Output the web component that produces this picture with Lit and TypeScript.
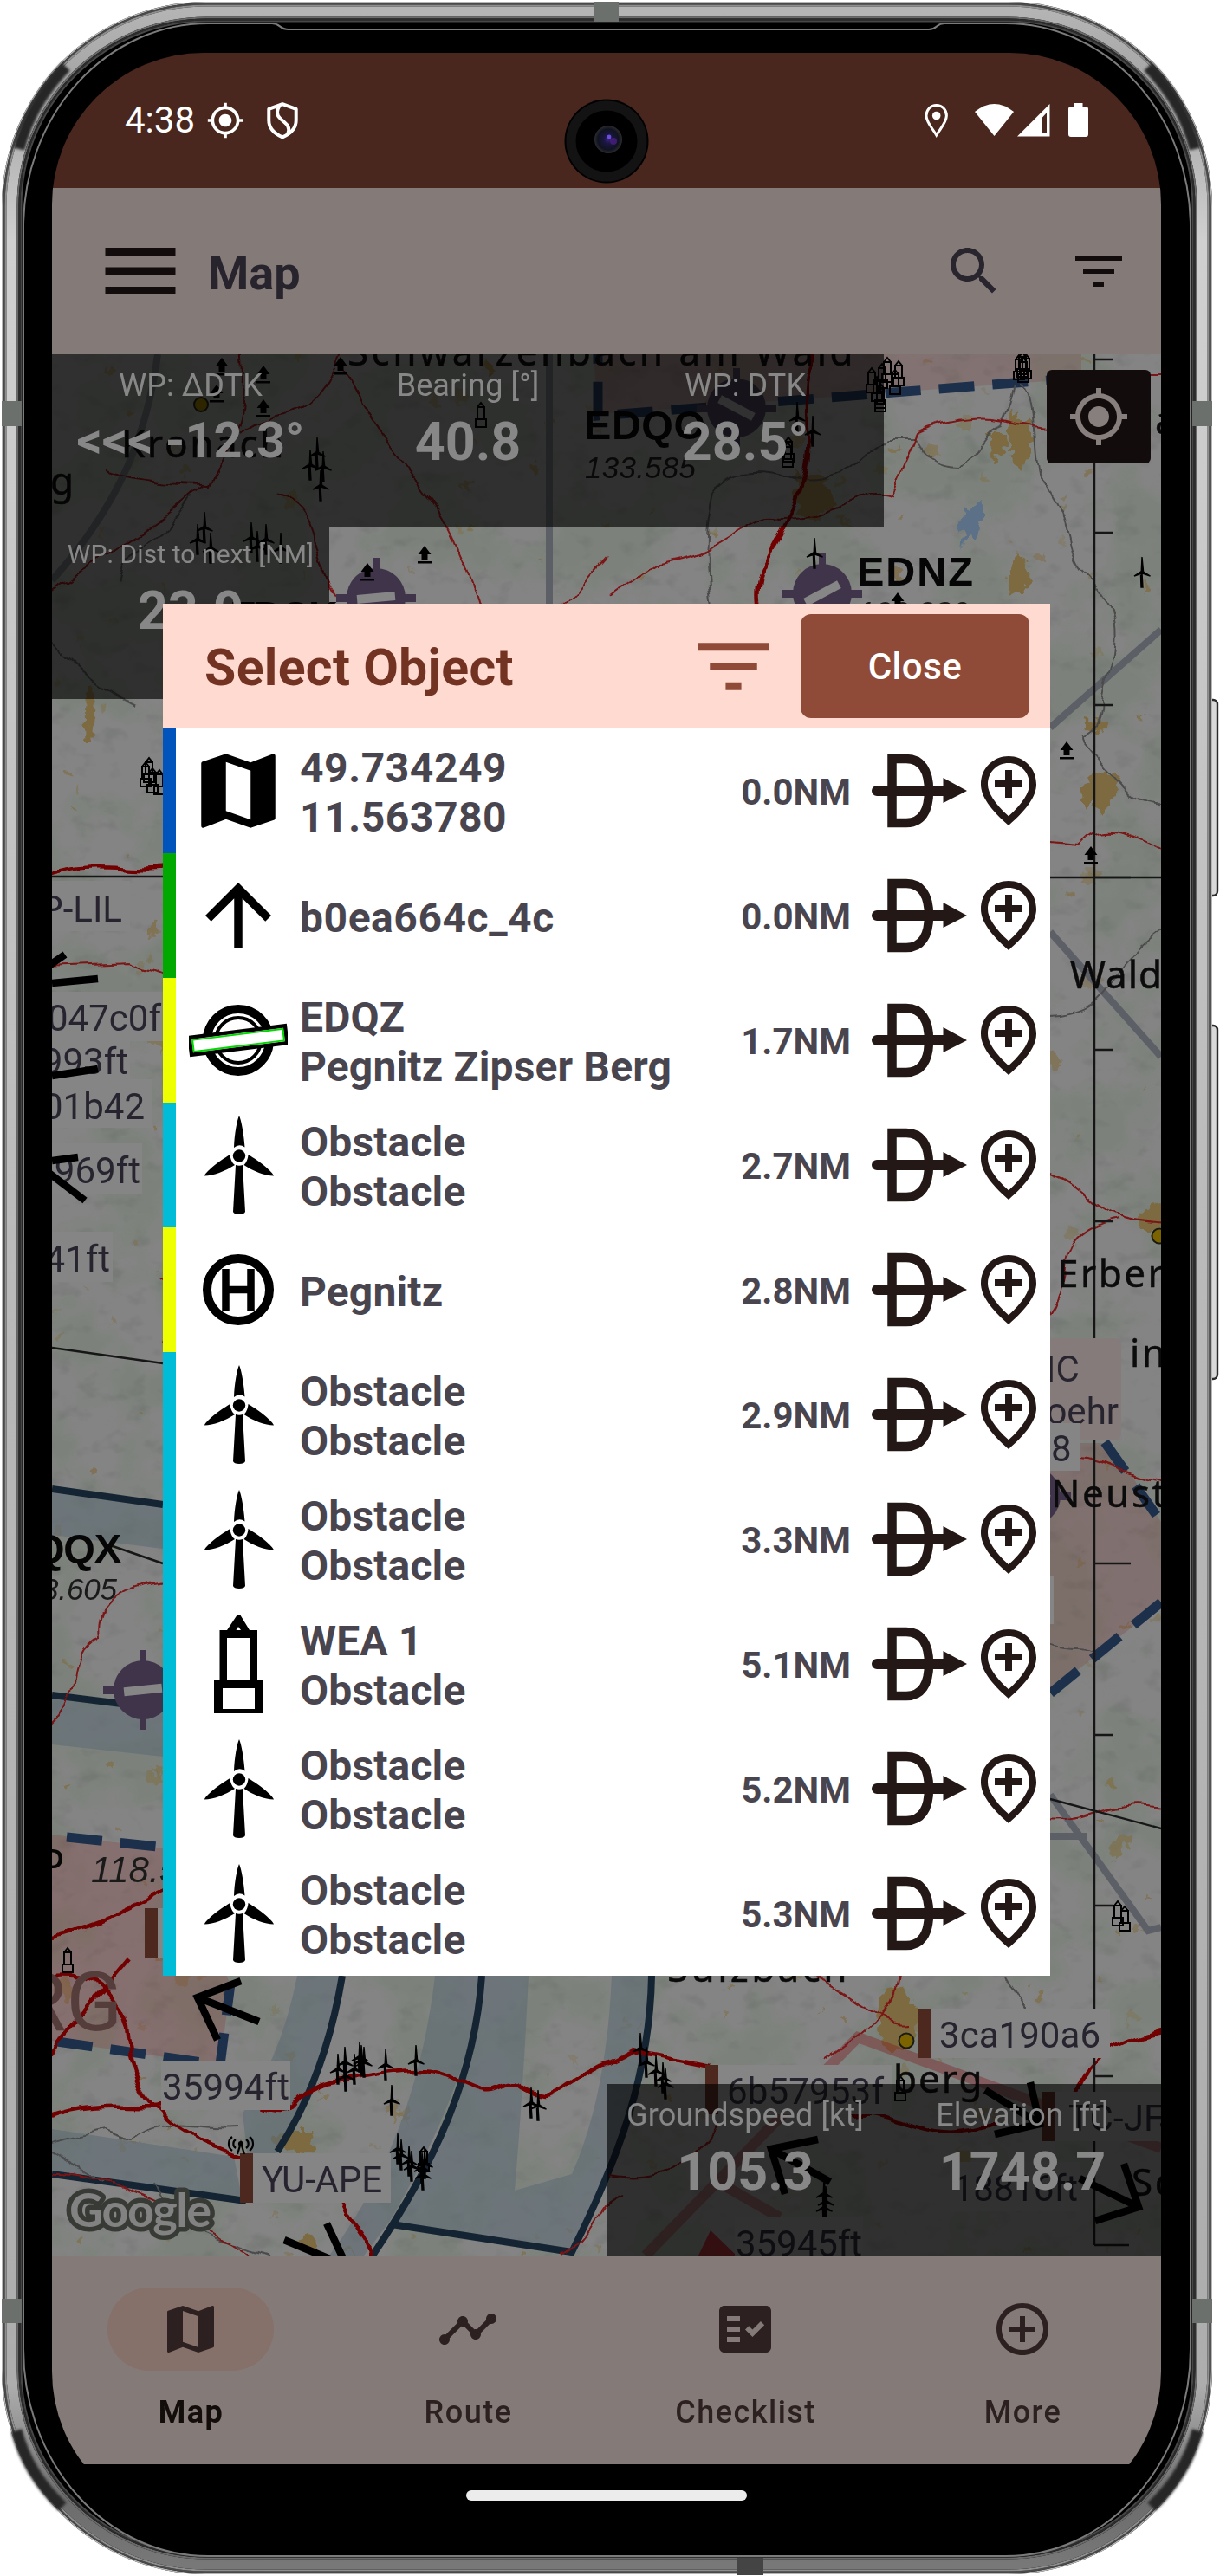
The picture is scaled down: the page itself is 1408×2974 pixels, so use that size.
import { LitElement, html, svg, css, nothing } from "lit";
import { customElement, property } from "lit/decorators.js";

const MAP_PATH =
  "M20.5 3l-.16.03L15 5.1 9 3 3.36 4.9c-.21.07-.36.25-.36.48V20.5c0 .28.22.5.5.5l.16-.03L9 18.9l6 2.1 5.64-1.9c.21-.07.36-.25.36-.48V3.5c0-.28-.22-.5-.5-.5zM15 19l-6-2.11V5l6 2.11V19z";
const GPS_PATH =
  "M12 8c-2.21 0-4 1.79-4 4s1.79 4 4 4 4-1.79 4-4-1.79-4-4-4zm8.94 3c-.46-4.17-3.77-7.48-7.94-7.94V1h-2v2.06C6.83 3.52 3.52 6.83 3.06 11H1v2h2.06c.46 4.17 3.77 7.48 7.94 7.94V23h2v-2.06c4.17-.46 7.48-3.77 7.94-7.94H23v-2h-2.06zM12 19c-3.87 0-7-3.13-7-7s3.13-7 7-7 7 3.13 7 7-3.13 7-7 7z";
const ICONS: Record<string, string> = {
  map: MAP_PATH,
  gps: GPS_PATH,
  menu: "M3 18h18v-2H3v2zm0-5h18v-2H3v2zm0-7v2h18V6H3z",
  search:
    "M15.5 14h-.79l-.28-.27C15.41 12.59 16 11.11 16 9.5 16 5.91 13.09 3 9.5 3S3 5.91 3 9.5 5.91 16 9.5 16c1.61 0 3.09-.59 4.23-1.57l.27.28v.79l5 4.99L20.49 19l-4.99-5zm-6 0C7.01 14 5 11.99 5 9.5S7.01 5 9.5 5 14 7.01 14 9.5 11.99 14 9.5 14z",
  filter: "M10 18h4v-2h-4v2zM3 6v2h18V6H3zm3 7h12v-2H6v2z",
  up: "M4 12l1.41 1.41L11 7.83V20h2V7.83l5.58 5.59L20 12l-8-8-8 8z",
  pin: "M13 6h-2v3H8v2h3v3h2v-3h3V9h-3V6zm5 4.2C18 6.57 15.35 4 12 4s-6 2.57-6 6.2c0 2.34 1.95 5.44 6 9.14 4.05-3.7 6-6.8 6-9.14zM12 2c4.2 0 8 3.22 8 8.2 0 3.32-2.67 7.25-8 11.8-5.33-4.55-8-8.48-8-11.8C4 5.22 7.8 2 12 2z",
  route:
    "M23 8c0 1.1-.9 2-2 2-.18 0-.35-.02-.51-.07l-3.56 3.55c.05.16.07.34.07.52 0 1.1-.9 2-2 2s-2-.9-2-2c0-.18.02-.36.07-.52l-2.55-2.55c-.16.05-.34.07-.52.07s-.36-.02-.52-.07l-4.55 4.56c.05.16.07.33.07.51 0 1.1-.9 2-2 2s-2-.9-2-2 .9-2 2-2c.18 0 .35.02.51.07l4.56-4.55C8.02 9.36 8 9.18 8 9c0-1.1.9-2 2-2s2 .9 2 2c0 .18-.02.36-.07.52l2.55 2.55c.16-.05.34-.07.52-.07s.36.02.52.07l3.55-3.56C19.02 8.35 19 8.18 19 8c0-1.1.9-2 2-2s2 .9 2 2z",
  checklist:
    "M20 3H4c-1.1 0-2 .9-2 2v14c0 1.1.9 2 2 2h16c1.1 0 2-.9 2-2V5c0-1.1-.9-2-2-2zM10 17H5v-2h5v2zm0-4H5v-2h5v2zm0-4H5V7h5v2zm4.82 6L12 12.16l1.41-1.41 1.41 1.42L17.99 9l1.42 1.42L14.82 15z",
  more: "M13 7h-2v4H7v2h4v4h2v-4h4v-2h-4V7zm-1-5C6.48 2 2 6.48 2 12s4.48 10 10 10 10-4.48 10-10S17.52 2 12 2zm0 18c-4.41 0-8-3.59-8-8s3.59-8 8-8 8 3.59 8 8-3.59 8-8 8z",
};

@customElement("m-icon")
class MIcon extends LitElement {
  @property() name = "map";
  static styles = css`
    :host { display: inline-flex; }
    .glyph { width: 100%; height: 100%; fill: currentColor; display: block; }
  `;
  render() {
    return html`<svg class="glyph" viewBox="0 0 24 24"><path fill-rule="evenodd" d=${ICONS[this.name]}></path></svg>`;
  }
}

/* ---------- metal body of the device ---------- */
@customElement("device-body")
class DeviceBody extends LitElement {
  static styles = css`
    :host { display: block; width: 1408px; height: 2974px; }
    .body { display: block; }
  `;
  render() {
    const ring = (o: number, w: number, c: string) => svg`
      <rect x=${2 + o + w / 2} y=${2 + o + w / 2} width=${1397 - 2 * o - w} height=${2970 - 2 * o - w}
        rx=${236 - o - w / 2} fill="none" stroke=${c} stroke-width=${w}></rect>`;
    const dark = (d: string) => svg`<path d=${d} fill="none" stroke="#262626" stroke-width="13" filter="url(#soft)"></path>`;
    return html`<svg class="body" width="1408" height="2974" viewBox="0 0 1408 2974">
      <defs>
        <linearGradient id="metal" x1="0" y1="0" x2="0" y2="1">
          <stop offset="0" stop-color="#b4b4b4"></stop>
          <stop offset=".03" stop-color="#a4a4a4"></stop>
          <stop offset=".09" stop-color="#d0d0d0"></stop>
          <stop offset=".5" stop-color="#b9b9b9"></stop>
          <stop offset=".93" stop-color="#adadad"></stop>
          <stop offset=".975" stop-color="#6c6c6c"></stop>
          <stop offset="1" stop-color="#787878"></stop>
        </linearGradient>
        <filter id="soft" x="-30%" y="-30%" width="160%" height="160%"><feGaussianBlur stdDeviation="1.6"></feGaussianBlur></filter>
      </defs>
      <rect x="1394" y="808" width="11" height="226" rx="5" fill="#d9d9d9" stroke="#2a2a2a" stroke-width="2.4"></rect>
      <rect x="1394" y="1184" width="11" height="408" rx="5" fill="#d9d9d9" stroke="#2a2a2a" stroke-width="2.4"></rect>
      <rect x="2" y="2" width="1397" height="2970" rx="236" fill="#000"></rect>
      ${ring(0, 1.5, "#b5b5b5")} ${ring(1.5, 2, "#4a4a4a")} ${ring(3.5, 2, "#8e8e8e")}
      ${ring(5.5, 12, "url(#metal)")} ${ring(17.5, 2, "#6a6a6a")} ${ring(19.5, 2, "#2c2c2c")} ${ring(21.5, 2, "#474747")}
      ${dark("M22 172Q35 120 76 77")}
      ${dark("M1379 172Q1366 120 1325 77")}
      ${dark("M19 2806Q32 2856 72 2894")}
      ${dark("M1382 2806Q1369 2856 1329 2894")}
      <path d="M27 262 V2712 A213 239 0 0 0 240 2951 H1161 A213 239 0 0 0 1374 2712 V262 A213 235 0 0 0 1161 27 H1090 C1080 27 1082 34 1072 34 H333 C322 34 324 27 314 27 H240 A213 235 0 0 0 27 262Z"
        fill="#000" stroke="#7b7b7b" stroke-width="2"></path>
      <g fill="#6c706d">
        <rect x="2" y="463" width="23" height="29"></rect><rect x="1376" y="463" width="23" height="29"></rect>
        <rect x="2" y="2654" width="23" height="28"></rect><rect x="1376" y="2654" width="23" height="28"></rect>
        <rect x="686" y="2" width="28" height="23"></rect>
      </g>
      <rect x="851" y="2953" width="30" height="20" fill="#444"></rect>
    </svg>`;
  }
}

/* ---------- aeronautical chart ---------- */
function seeded(seed: number) {
  let s = seed;
  return () => {
    s = (s * 1664525 + 1013904223) % 4294967296;
    return s / 4294967296;
  };
}

@customElement("chart-map")
class ChartMap extends LitElement {
  static styles = css`
    :host { display: block; width: 1280px; height: 2196px; }
    .chart { display: block; }
    .road { fill: none; stroke: #7c1414; stroke-width: 2; }
    .motor { fill: none; stroke: #720606; stroke-width: 4.5; }
    .rail { fill: none; stroke: #4c4c4c; stroke-width: 2; }
    .high { fill: none; stroke: #5c5f66; stroke-width: 8; }
    .navy { fill: none; stroke: #142433; stroke-width: 8; }
    .dash { fill: none; stroke: #1c2f4b; stroke-width: 11; stroke-dasharray: 41 21; }
    .grid { fill: none; stroke: #161616; stroke-width: 2.4; }
    .town { font-family: "Noto Sans", "DejaVu Sans", sans-serif; fill: #0b0b0b; font-size: 44px; letter-spacing: 2.500px; stroke: #0b0b0b; stroke-width: 0.5; }
    .wald { letter-spacing: 1px; }
    .code { font-family: "Liberation Sans", Arial, sans-serif; font-weight: 700; font-size: 47px; fill: #060606; }
    .letter { font-size: 31px; }
    .freq { font-family: "Liberation Sans", Arial, sans-serif; font-style: italic; font-size: 35px; fill: #1a1a1a; }
    .wide { font-size: 42px; }
    .call { font-family: Roboto, sans-serif; font-size: 42px; fill: #27242f; }
    .area { font-family: Roboto, sans-serif; font-size: 95px; fill: #553d3c; }
    .logo { font-family: Lato, sans-serif; font-weight: 700; font-size: 54px; }
    .traffic { fill: none; stroke: #000; stroke-width: 8.5; }
  `;

  private patches() {
    const r = seeded(77);
    const out = [];
    for (let i = 0; i < 560; i++) {
      const x = 60 + r() * 1280;
      const y = 409 + r() * 2196;
      const s = 3 + r() * r() * r() * 17;
      let d = "";
      for (let k = 0; k < 11; k++) {
        const a = (k / 11) * 6.283;
        const q = s * (0.3 + r() * 0.9);
        d += `${k ? "L" : "M"}${(x + Math.cos(a) * q).toFixed(1)} ${(y + Math.sin(a) * q * 1.1).toFixed(1)}`;
      }
      out.push(svg`<path d=${d + "Z"} fill="#7f6f48" opacity=${(0.35 + r() * 0.5).toFixed(2)}></path>`);
    }
    return out;
  }
  private turbine(x: number, y: number) {
    return svg`<path transform="translate(${x} ${y})" d="M-1.6 2L-1 18H1L0 2zM-.8 0L0-17 1.6 0zM0-1L-9 5 0 2zM0-1L9.5 5 0 2z" fill="#000" stroke="#000" stroke-width="1.4"></path>`;
  }
  private tower(x: number, y: number) {
    return svg`<path transform="translate(${x} ${y})" d="M-4-10V4H4V-10ZM-4-10L0-15 4-10M-6 4H6V13H-6Z" fill="none" stroke="#000" stroke-width="2"></path>`;
  }
  private lift(x: number, y: number) {
    return svg`<path transform="translate(${x} ${y})" d="M0-10L7.5 0H3.5V6H-3.5V0H-7.5ZM-8 8H8V10.5H-8Z" fill="#000"></path>`;
  }
  private airport(x: number, y: number, a: number) {
    return svg`<g transform="translate(${x} ${y})">
      <circle r="34" fill="#3f344a"></circle>
      <path d="M-46-4H46V5H-46ZM-4-46H4V46H-4Z" fill="#3f344a"></path>
      <rect x="-22" y="-5" width="44" height="10" fill="#868686" transform="rotate(${a})"></rect></g>`;
  }
  private tag(x: number, y: number, w: number, text: string, tx: number, tw: number, bar = false) {
    return svg`<rect x=${x} y=${y} width=${w} height="57" fill="#858585"></rect>
      ${bar ? svg`<rect x=${x - 15} y=${y} width="15" height="57" fill="#4c281e"></rect>` : nothing}
      <text class="call" x=${tx} y=${y + 45} textLength=${tw}>${text}</text>`;
  }

  render() {
    const ticks = [415, 615, 814, 1212, 1410, 2003, 2200, 2397];
    const turbines = [
      [366, 522], [358, 536], [370, 560], [373, 538], [236, 608], [228, 622], [243, 632], [290, 620], [307, 622], [324, 632], [297, 630],
      [920, 481], [938, 497], [940, 638], [1318, 660], [390, 2388], [398, 2380], [399, 2396], [409, 2388], [415, 2374], [420, 2380],
      [417, 2378], [445, 2383], [480, 2378], [452, 2424], [613, 2427], [621, 2430], [459, 2480], [463, 2487], [472, 2494], [475, 2500],
      [487, 2502], [490, 2497], [488, 2510], [739, 2364], [746, 2380], [757, 2390], [765, 2398], [768, 2405], [951, 2532], [953, 2541], [951, 2548],
    ];
    const towers = [
      [555, 480], [1006, 440], [1012, 450], [1018, 435], [1024, 428], [1016, 458], [1033, 442], [1037, 432], [1016, 462], [1180, 422], [1176, 425],
      [1184, 424], [1181, 428], [910, 520], [909, 526], [168, 895], [176, 902], [184, 904], [172, 890], [78, 2264], [1039, 2412], [1290, 2210], [1298, 2216], [489, 2494],
    ];
    const lifts = [[256, 423], [304, 432], [250, 454], [304, 471], [393, 422], [490, 640], [424, 660], [1036, 694], [1231, 866], [1259, 987]];
    return html`<svg class="chart" width="1280" height="2196" viewBox="60 409 1280 2196">
      <defs>
        <filter id="terrain" x="0" y="0" width="100%" height="100%" color-interpolation-filters="sRGB">
          <feTurbulence type="fractalNoise" baseFrequency=".011 .012" numOctaves="4" seed="9"></feTurbulence>
          <feColorMatrix values="0 0 0 0 .482  0 0 0 0 .51  0 0 0 0 .475  5 0 0 0 -2.1"></feColorMatrix>
        </filter>
        <filter id="relief" x="0" y="0" width="100%" height="100%" color-interpolation-filters="sRGB">
          <feTurbulence type="fractalNoise" baseFrequency=".035 .05" numOctaves="3" seed="4"></feTurbulence>
          <feColorMatrix values="0 0 0 0 .3  0 0 0 0 .31  0 0 0 0 .31  0 4 0 0 -2.3"></feColorMatrix>
        </filter>
        <filter id="ragged" x="60" y="409" width="1280" height="2196" filterUnits="userSpaceOnUse">
          <feTurbulence type="fractalNoise" baseFrequency=".09" numOctaves="2" seed="2"></feTurbulence>
          <feDisplacementMap in="SourceGraphic" scale="18" xChannelSelector="R" yChannelSelector="G"></feDisplacementMap>
        </filter>
        <filter id="winding" x="60" y="409" width="1280" height="2196" filterUnits="userSpaceOnUse">
          <feTurbulence type="fractalNoise" baseFrequency=".03" numOctaves="2" seed="6"></feTurbulence>
          <feDisplacementMap in="SourceGraphic" scale="16" xChannelSelector="R" yChannelSelector="G"></feDisplacementMap>
        </filter>
      </defs>
      <rect x="60" y="409" width="1280" height="2196" fill="#848484"></rect>
      <rect x="60" y="409" width="1280" height="2196" filter="url(#terrain)" opacity=".8"></rect>
      <rect x="60" y="409" width="1280" height="2196" filter="url(#relief)" opacity=".16"></rect>
      <g filter="url(#ragged)">
        ${this.patches()}
        <g fill="#7d6a3f">
          <path d="M1165 470l14 18 10-6 2 40-12 22-10-12-6-36zM1175 638l14 20-2 22-24 6 2-22zM1262 890l32 6-6 22-16 22-12-14-8 10-4-20zM920 545l34 8 8 32-22 18-18-12-4-20zM1020 2300l24-4 16 24-6 40-26 12-16-30zM1140 500l20 0 2 22-16 10zM1250 830l30 4-6 12-20-4z"></path>
          <path d="M1318 1400l22-16v36h-24zM330 2460l30 0 4 20-24 8-28-18zM340 2590l16-12 10 14-6 12zM100 790l10 20-4 50-8 0zM560 415l14 10-8 12-10-10z"></path>
        </g>
        <path d="M1117 587l16-10 6 16-12 24-14 6-4 12 2-20-7-10z" fill="#5b7187"></path>
      </g>

      <path d="M685 409H1248V437L690 478Z" fill="#7b2f2f" opacity=".2"></path>
      <path class="dash" d="M1248 436L690 480V409"></path>
      <path d="M1212 1666H1282L1340 1757V1852L1212 1953Z" fill="#7b3a3a" opacity=".26"></path>
      <path class="dash" d="M1275 1665L1340 1757M1340 1850L1212 1955"></path>
      <path d="M60 2118L188 2134 266 2290 254 2384 60 2356Z" fill="#8a3030" opacity=".24"></path>
      <path class="dash" d="M77 2121L240 2138M66 2357L254 2384L266 2290"></path>

      <g fill="#5f6c74" opacity=".62">
        <path d="M60 1720L188 1738V1788L60 1772ZM60 1958L188 1974V2028L60 2014ZM60 2458L270 2490 280 2542 60 2510Z"></path>
        <path d="M343 2281H395Q375 2400 320 2484L292 2544 280 2440Q326 2370 343 2281ZM502 2281H556Q545 2400 450 2564L420 2604 380 2604Q480 2470 502 2281ZM594 2529L690 2544Q740 2430 752 2281H706Q700 2420 660 2510ZM610 2281H556Q540 2440 455 2568L660 2600 690 2543 594 2529Q604 2410 610 2281Z"></path>
      </g>
      <path class="navy" d="M60 1719L188 1737M60 1957L188 1973M60 2510L284 2541M395 2281Q375 2400 320 2484M556 2281C548 2400 500 2500 430 2604M752 2281C750 2400 710 2500 660 2600L452 2568"></path>
      <path class="high" d="M182 409C170 500 140 580 60 670M634 409V697M1340 727L1212 840M1212 1076L1340 1220M1212 2072L1325 2229 1340 2225"></path>
      <path class="high" d="M1212 2120H1255"></path>

      <g filter="url(#winding)">
      <path class="rail" d="M40 724C110 790 130 800 155 812M220 575C180 640 150 620 140 670M820 697C810 640 815 600 822 570C840 540 870 540 910 550C970 570 990 520 1025 506H1058C1070 530 1080 540 1110 540C1130 520 1130 500 1158 490C1170 460 1170 450 1172 440M1180 440C1200 460 1190 520 1200 550C1240 590 1230 640 1250 660C1310 720 1280 760 1272 810C1268 880 1220 820 1280 890C1300 910 1310 930 1340 928M1212 1174C1290 1170 1270 1120 1350 1070M50 2476L120 2460L150 2470C180 2440 230 2460 272 2456M180 2520C200 2570 240 2580 310 2604M50 2480L120 2520M1212 1900C1240 1910 1240 1900 1262 1910M1160 2281L1200 2350"></path>
      <path class="road" d="M280 400C290 500 260 510 240 560C180 560 140 550 120 545M395 400C370 500 300 470 275 500M395 420C440 520 500 560 530 640C560 700 560 730 560 800M40 692C160 620 190 600 235 560M320 570C380 590 350 640 390 690C430 700 450 720 448 797M704 690L760 650C840 640 860 590 900 600C980 600 990 560 1030 572L1060 500C1100 480 1150 480 1175 490L1208 495M1325 433H1350M704 640L650 700 610 800M1200 971L1250 975C1270 950 1300 960 1350 986M1200 1350C1270 1370 1250 1410 1350 1412M1290 1408C1200 1430 1250 1480 1200 1530M1200 1682C1270 1670 1300 1710 1350 1714M1200 2100C1260 2110 1270 2070 1350 2088M50 1115L150 1111 200 1130M185 1480C220 1500 200 1520 188 1552M198 1824C130 1830 110 1860 115 1890C70 1910 100 1970 50 1998M930 2281C1000 2310 1010 2340 1050 2335M1035 2275C1035 2330 990 2350 950 2380M704 2510C760 2520 800 2500 830 2450M644 2604C700 2580 680 2550 720 2535M50 2510C140 2505 220 2560 300 2610"></path>
      <path class="motor" d="M945 400C915 460 945 500 925 560C900 640 870 650 875 700C880 740 870 760 870 800M50 1012C110 990 150 1010 198 1001M50 2238C130 2220 150 2200 198 2180M50 2284C120 2270 140 2320 146 2340C150 2450 230 2470 280 2490M50 2380L150 2260M50 2445C120 2420 170 2440 198 2428M300 2432C350 2450 330 2416 380 2403C450 2390 500 2380 530 2402C580 2430 570 2400 600 2408C640 2440 650 2400 704 2380L730 2367 820 2385M395 2540C405 2570 425 2580 430 2610M1240 2420C1250 2370 1300 2350 1350 2341M980 2441C1040 2430 1060 2480 1150 2450"></path>
      </g>
      <path d="M745 2604L990 2352 1340 2480M830 2520L900 2560" fill="none" stroke="#7d1f22" stroke-width="12" opacity=".4"></path>
      <path d="M806 2604L820 2575 850 2604Z" fill="#8c1218" opacity=".8"></path>

      <path class="grid" d="M1263 409V2592M60 1012H188M1212 1013H1340M60 1556L188 1574M130 1785L188 1805M1212 2077L1340 2111"></path>
      <path class="grid" d=${ticks.map((t) => `M1263 ${t}h21`).join("") + "M1263 1013h42M1263 1805h42M1263 2592h40"}></path>

      ${this.airport(434, 690, -5)} ${this.airport(949, 685, -28)} ${this.airport(850, 471, 28)} ${this.airport(165, 1951, -6)} ${this.airport(1190, 1727, 10)}
      <circle cx="232" cy="467" r="8" fill="#7b6400" stroke="#1b1b14" stroke-width="2"></circle>
      <circle cx="1338" cy="1427" r="8.5" fill="#7b6400" stroke="#1b1b14" stroke-width="2"></circle>
      <circle cx="1046" cy="2356" r="8.5" fill="#7b6400" stroke="#1b1b14" stroke-width="2"></circle>

      <text class="town" x="401" y="422" textLength="586">Schwarzenbach am Wald</text>
      <text class="town" x="140" y="528" textLength="190">Kronach</text>
      <text class="town" x="58" y="571">g</text>
      <text class="town" x="1333" y="501">a</text>
      <text class="code" x="674" y="507" textLength="140">EDQO</text>
      <text class="freq" x="675" y="552" textLength="128">133.585</text>
      <text class="code" x="989" y="676" textLength="134">EDNZ</text>
      <text class="freq" x="990" y="719" textLength="128">120.280</text>
      <text class="code" x="265" y="727" textLength="125">EDQK</text>
      <text class="town wald" x="1235" y="1141">Wald</text>
      <text class="town" x="1220" y="1486">Erber</text>
      <text class="town" x="1304" y="1578">in</text>
      <text class="code" x="38" y="1804" textLength="102">QQX</text>
      <text class="freq" x="48" y="1847" textLength="87">3.605</text>
      <text class="freq wide" x="105" y="2173">118.5</text>
      <text class="code letter" x="51" y="2157">D</text>
      <text class="area" x="18" y="2344">RG</text>
      <text class="town" x="770" y="2288" textLength="210">Sulzbach</text>

      <rect x="1150" y="1545" width="144" height="118" rx="8" fill="#857b7a"></rect>
      <text class="call" x="1207" y="1595">IC</text>
      <text class="call" x="1291" y="1644" text-anchor="end">oehr</text>
      <rect x="1180" y="1643" width="67" height="55" fill="#858585"></rect>
      <text class="call" x="1213" y="1687">8</text>
      <text class="town" x="1213" y="1740">Neust</text>
      <rect x="1180" y="1820" width="36" height="55" fill="#858585"></rect>

      <rect x="60" y="1017" width="90" height="58" fill="#858585"></rect>
      <text class="call" x="141" y="1064" text-anchor="end">P-LIL</text>
      <rect x="60" y="1145" width="130" height="57" fill="#858585"></rect>
      <text class="call" x="186" y="1190" text-anchor="end">047c0f</text>
      <rect x="60" y="1196" width="90" height="50" fill="#858585"></rect>
      <text class="call" x="148" y="1240" text-anchor="end">993ft</text>
      <rect x="60" y="1246" width="116" height="56" fill="#858585"></rect>
      <text class="call" x="167" y="1292" text-anchor="end">01b42</text>
      <rect x="60" y="1320" width="104" height="58" fill="#858585"></rect>
      <text class="call" x="162" y="1366" text-anchor="end">969ft</text>
      <rect x="60" y="1422" width="70" height="58" fill="#858585"></rect>
      <text class="call" x="127" y="1468" text-anchor="end">41ft</text>
      <rect x="167" y="2203" width="15" height="57" fill="#4c281e"></rect><rect x="182" y="2203" width="6" height="57" fill="#858585"></rect>

      ${turbines.map(([x, y]) => this.turbine(x, y))} ${towers.map(([x, y]) => this.tower(x, y))} ${lifts.map(([x, y]) => this.lift(x, y))}

      ${this.tag(186, 2379, 149, "35994ft", 187, 147)}
      ${this.tag(292, 2486, 159, "YU-APE", 302, 139, true)}
      ${this.tag(1075, 2319, 206, "3ca190a6", 1084, 186, true)}
      ${this.tag(829, 2384, 201, "6b57953f", 839, 181, true)}
      ${this.tag(1217, 2415, 160, "TC-JFJ", 1233, 128, true)}
      ${this.tag(1096, 2496, 150, "18816ft", 1100, 144)}
      ${this.tag(848, 2560, 148, "35945ft", 849, 146)}
      <text class="town" x="1031" y="2416" textLength="105">berg</text>
      <text class="town" x="1306" y="2535">Sc</text>
      <g fill="none" stroke="#000" stroke-width="2.2"><path d="M274 2487L278 2474 282 2487M272 2470a6 6 0 0 0 0 10M284 2470a6 6 0 0 1 0 10M268 2467a10 10 0 0 0 0 16M288 2467a10 10 0 0 1 0 16"></path><circle cx="278" cy="2475" r="2"></circle></g>

      <path class="traffic" d="M278 2287L228 2306 251 2355M228 2306L299 2334M328 2586L400 2616 377 2567M944 2470L890 2481 906 2533M890 2481L958 2519M1189 2404L1200 2452 1148 2464M1137 2413L1200 2452M1297 2498L1314 2548 1264 2564M1246 2515L1314 2548M55 1116L75 1102M60 1135L113 1130M60 1242L113 1234M60 1340L90 1336M55 1353L98 1386"></path>

      <text class="logo" x="80" y="2571" textLength="164" stroke="#373a35" stroke-width="11" stroke-linejoin="round" fill="#373a35">Google</text>
      <text class="logo" x="80" y="2571" textLength="164" fill="#828282" aria-hidden="true">Google</text>
    </svg>`;
  }
}

/* ---------- object list ---------- */
type Kind = "map" | "up" | "airfield" | "turbine" | "heliport" | "tower";
interface Entry { kind: Kind; tone: string; lines: string[]; dist: string; }

const ENTRIES: Entry[] = [
  { kind: "map", tone: "blue", lines: ["49.734249", "11.563780"], dist: "0.0NM" },
  { kind: "up", tone: "green", lines: ["b0ea664c_4c"], dist: "0.0NM" },
  { kind: "airfield", tone: "yellow", lines: ["EDQZ", "Pegnitz Zipser Berg"], dist: "1.7NM" },
  { kind: "turbine", tone: "cyan", lines: ["Obstacle", "Obstacle"], dist: "2.7NM" },
  { kind: "heliport", tone: "yellow", lines: ["Pegnitz"], dist: "2.8NM" },
  { kind: "turbine", tone: "cyan", lines: ["Obstacle", "Obstacle"], dist: "2.9NM" },
  { kind: "turbine", tone: "cyan", lines: ["Obstacle", "Obstacle"], dist: "3.3NM" },
  { kind: "tower", tone: "cyan", lines: ["WEA 1", "Obstacle"], dist: "5.1NM" },
  { kind: "turbine", tone: "cyan", lines: ["Obstacle", "Obstacle"], dist: "5.2NM" },
  { kind: "turbine", tone: "cyan", lines: ["Obstacle", "Obstacle"], dist: "5.3NM" },
];

@customElement("object-row")
class ObjectRow extends LitElement {
  @property({ attribute: false }) entry!: Entry;
  static styles = css`
    :host { display: block; }
    .row { display: flex; align-items: center; height: 144px; background: #fff; color: #49454f; font-family: Roboto, sans-serif; font-weight: 700; }
    .strip { width: 15px; height: 144px; flex: none; }
    .blue { background: #0054bc; }
    .green { background: #00a800; }
    .yellow { background: #eeff00; }
    .cyan { background: #00bcd6; }
    .kind { width: 114px; height: 114px; margin-left: 15px; color: #000; flex: none; display: block; }
    .names { flex: 1; margin-left: 14px; font-size: 48px; line-height: 57px; padding-top: 4px; white-space: nowrap; letter-spacing: 0.150px; }
    .name { height: 57px; }
    .mono { letter-spacing: 0.550px; }
    .dist { font-size: 42px; line-height: 48px; padding-top: 4px; margin-right: 22px; }
    .direct { width: 112px; height: 96px; flex: none; display: block; }
    .pin { width: 96px; height: 96px; color: #231815; flex: none; }
  `;
  private picture(kind: Kind) {
    switch (kind) {
      case "map":
      case "up":
        return html`<m-icon class="kind" name=${kind}></m-icon>`;
      case "airfield":
        return html`<svg class="kind" viewBox="0 0 114 114">
          <circle cx="57" cy="57" r="36" fill="#fff" stroke="#000" stroke-width="10"></circle>
          <circle cx="57" cy="57" r="26" fill="none" stroke="#000" stroke-width="4"></circle>
          <g transform="rotate(-7 57 57)"><rect x="1.5" y="47" width="111" height="20" fill="#fff" stroke="#000" stroke-width="4.500"></rect>
          <rect x="4.5" y="50.3" width="105" height="13.4" fill="#fff" stroke="#00d800" stroke-width="2"></rect></g></svg>`;
      case "turbine":
        return html`<svg class="kind" viewBox="0 0 114 114">
          <path d="M58 0C60.5 5 63.5 22 64.5 36.5Q58 32 52 37C52.500 22 55.500 5 58 0ZM47.500 45C48 51 50 54.500 53 57C42 64 28 69.500 18 69.500C19 65 34 53 47.500 45ZM68.500 45C68 51 66 54.500 63.500 57C74 64 88 69.500 98 69.500C97 65 82 53 68.500 45ZM54 57Q58 58.500 62 57L65 111Q64 114 58 114T51 111Z"></path>
          <circle cx="58" cy="46.500" r="7.200"></circle></svg>`;
      case "heliport":
        return html`<svg class="kind" viewBox="0 0 114 114">
          <circle cx="57" cy="57" r="36" fill="none" stroke="#000" stroke-width="10"></circle>
          <path d="M42.500 33V81M71.500 33V81M42.500 57H71.500" fill="none" stroke="#000" stroke-width="8.500"></path></svg>`;
      case "tower":
        return html`<svg class="kind" viewBox="0 0 114 114">
          <path fill-rule="evenodd" d="M56 0H59L70 18H79V75H85V114H29V75H35.500V18H44ZM57 14L54.500 18H60ZM44 27V75H70V27ZM39 85V109H76V85Z"></path></svg>`;
    }
  }
  render() {
    const e = this.entry;
    return html`<div class="row">
      <span class="strip ${e.tone}"></span>
      ${this.picture(e.kind)}
      <div class="names ${e.kind === "up" || e.kind === "map" ? "mono" : ""}">${e.lines.map((l) => html`<div class="name">${l}</div>`)}</div>
      <span class="dist">${e.dist}</span>
      <svg class="direct" viewBox="0 0 112 96">
        <path d="M24.500 11H41C58 11 67 24 67 48S58 85 41 85H24.500Z" fill="none" stroke="#231815" stroke-width="10.500" transform="translate(1 0)"></path>
        <path d="M8 42H84.500V33L112 48 84.500 62V54H8A6 6 0 0 1 8 42Z" fill="#231815"></path>
      </svg>
      <m-icon class="pin" name="pin"></m-icon>
    </div>`;
  }
}

@customElement("object-dialog")
class ObjectDialog extends LitElement {
  static styles = css`
    :host { display: block; width: 1024px; }
    .head { height: 144px; background: #ffdad1; display: flex; align-items: center; box-sizing: border-box; padding: 0 24px 0 48px; font-family: Roboto, sans-serif; }
    .title { flex: 1; font-size: 59px; line-height: 70px; font-weight: 700; color: #723323; padding-top: 3px; letter-spacing: 0.300px; white-space: nowrap; }
    .filter { width: 109px; height: 109px; color: #904b38; margin-right: 23px; }
    .close { width: 264px; height: 120px; border: 0; border-radius: 12px; background: #904b38; color: #fff; font: 500 42px Roboto, sans-serif; letter-spacing: 0.500px; padding: 0; }
  `;
  render() {
    return html`<div class="head">
        <span class="title">Select Object</span>
        <m-icon class="filter" name="filter"></m-icon>
        <button class="close">Close</button>
      </div>
      ${ENTRIES.map((e) => html`<object-row .entry=${e}></object-row>`)}`;
  }
}

/* ---------- whole device ---------- */
@customElement("app-root")
class AppRoot extends LitElement {
  static styles = css`
    :host { display: block; width: 1408px; height: 2974px; background: #fff; font-family: Roboto, sans-serif; }
    .device { display: grid; width: 1408px; height: 2974px; overflow: hidden; }
    .layer { grid-area: 1 / 1; }
    .screen { width: 1280px; height: 2852px; margin: 61px 0 0 60px; border-radius: 175px; overflow: hidden; display: flex; flex-direction: column; background: #000; position: relative; }
    .status { height: 156px; flex: none; background: #4a271e; color: #fff; display: flex; align-items: center; box-sizing: border-box; padding: 0 84px 0 84px; }
    .clock { font-size: 42px; line-height: 48px; width: 94px; }
    .gps { width: 44px; height: 44px; }
    .shield { width: 38px; height: 44px; margin-left: 25px; }
    .signals { margin-left: auto; }
    .bar { height: 192px; flex: none; background: #847a77; display: flex; align-items: center; box-sizing: border-box; padding: 0 36px 0 48px; }
    .menu { width: 108px; height: 108px; color: #120c0c; }
    .heading { flex: 1; font-size: 54px; font-weight: 700; color: #27242e; margin-left: 24px; padding-top: 4px; }
    .search { width: 72px; height: 72px; color: #28252e; margin-right: 72px; }
    .tune { width: 72px; height: 72px; color: #130c0c; }
    .mapview { height: 2196px; flex: none; display: grid; overflow: hidden; }
    .chart { grid-area: 1 / 1; }
    .hud { grid-area: 1 / 1; z-index: 1; display: flex; flex-direction: column; align-items: flex-start; }
    .strip { display: flex; background: rgba(0, 0, 0, 0.63); height: 199px; }
    .cell { width: 320px; display: flex; flex-direction: column; align-items: center; white-space: nowrap; color: #878787; }
    .label { font-size: 36px; line-height: 42px; margin-top: 15px; letter-spacing: 0.100px; }
    .value { font-size: 61px; line-height: 72px; font-weight: 700; margin-top: 8px; }
    .small { font-size: 57.500px; margin-top: 7px; }
    .thin { font-size: 30px; margin-top: 11px; }
    .low { font-size: 61px; margin-top: 8px; }
    .bottom { margin-top: auto; align-self: flex-end; }
    .locate { grid-area: 1 / 1; z-index: 2; justify-self: end; margin: 18px 12px 0 0; width: 120px; height: 108px; border-radius: 6px; background: #130c0c; color: #867f7d; display: flex; align-items: center; justify-content: center; }
    .locate-icon { width: 72px; height: 72px; }
    .nav { height: 240px; flex: none; background: #847a77; display: flex; }
    .tab { width: 320px; display: flex; flex-direction: column; align-items: center; color: #2c2120; padding-top: 36px; box-sizing: border-box; }
    .pill { width: 192px; height: 96px; border-radius: 48px; display: flex; align-items: center; justify-content: center; }
    .pill.on { background: #86706a; }
    .tab-icon { width: 72px; height: 72px; }
    .tab-label { font-size: 36px; font-weight: 500; letter-spacing: 1.500px; line-height: 48px; margin-top: 24px; padding-left: 1px; }
    .tab-label.on { font-weight: 700; color: #120c0b; }
    .home { width: 324px; height: 12px; border-radius: 6px; background: #ececec; margin: 30px auto 0; flex: none; }
    .dialog { position: absolute; z-index: 5; left: 128px; top: 636px; }
    .camera { position: absolute; z-index: 5; left: 590px; top: 52px; }
  `;
  private cell(label: string, value: string, lc = "", vc = "") {
    return html`<div class="cell"><span class="label ${lc}">${label}</span><span class="value ${vc}">${value}</span></div>`;
  }
  private tab(icon: string, text: string, on = false) {
    return html`<div class="tab"><span class="pill ${on ? "on" : ""}"><m-icon class="tab-icon" name=${icon}></m-icon></span>
      <span class="tab-label ${on ? "on" : ""}">${text}</span></div>`;
  }
  render() {
    return html`<div class="device">
      <device-body class="layer"></device-body>
      <div class="layer screen">
        <div class="status">
          <span class="clock">4:38</span>
          <m-icon class="gps" name="gps"></m-icon>
          <svg class="shield" viewBox="0 0 36 42" fill="none" stroke="#fff" stroke-width="3.800" stroke-linejoin="round">
            <path d="M18 3L33 8.500V21C33 30 26 36 18 39.500C10 36 3 30 3 21V8.500Z"></path>
            <path d="M15 4.500C9 14 14 18 19 22S27 30 24 35.500"></path>
          </svg>
          <svg class="signals" width="192" height="42" viewBox="1064 118 192 42">
            <path d="M1080.700 121.500C1074 121.500 1069 127 1069 133.500C1069 141 1076 148 1080.700 156C1085.500 148 1092.400 141 1092.400 133.500C1092.400 127 1087.500 121.500 1080.700 121.500Z" fill="none" stroke="#fff" stroke-width="3"></path>
            <circle cx="1080.700" cy="133.500" r="4.800" fill="#fff"></circle>
            <path d="M1125 129Q1147.500 111 1170 129L1147.500 157Z" fill="#fff"></path>
            <path d="M1211.500 120V157.500H1174ZM1208 130L1202.500 136V153.500H1208Z" fill="#fff" fill-rule="evenodd"></path>
            <path d="M1240 119H1249.500V123H1253Q1256 123 1256 126V155Q1256 158 1253 158H1236Q1233 158 1233 155V126Q1233 123 1236 123H1240Z" fill="#fff"></path>
          </svg>
        </div>
        <div class="bar">
          <m-icon class="menu" name="menu"></m-icon>
          <span class="heading">Map</span>
          <m-icon class="search" name="search"></m-icon>
          <m-icon class="tune" name="filter"></m-icon>
        </div>
        <div class="mapview">
          <chart-map class="chart"></chart-map>
          <div class="hud">
            <div class="strip">${this.cell("WP: ΔDTK", "<<< -12.3°", "", "small")}${this.cell("Bearing [°]", "40.8")}${this.cell("WP: DTK", "28.5°")}</div>
            <div class="strip">${this.cell("WP: Dist to next [NM]", "23.9", "thin", "low")}</div>
            <div class="strip bottom">${this.cell("Groundspeed [kt]", "105.3")}${this.cell("Elevation [ft]", "1748.7")}</div>
          </div>
          <div class="locate"><m-icon class="locate-icon" name="gps"></m-icon></div>
        </div>
        <div class="nav">
          ${this.tab("map", "Map", true)}${this.tab("route", "Route")}${this.tab("checklist", "Checklist")}${this.tab("more", "More")}
        </div>
        <div class="home"></div>
        <object-dialog class="dialog"></object-dialog>
        <svg class="camera" width="100" height="100" viewBox="0 0 100 100">
          <defs>
            <radialGradient id="lens"><stop offset="0" stop-color="#3c2478"></stop><stop offset=".3" stop-color="#1b1644"></stop><stop offset=".75" stop-color="#10131f"></stop><stop offset="1" stop-color="#2b2b30"></stop></radialGradient>
          </defs>
          <circle cx="50" cy="50" r="48.500" fill="#000"></circle>
          <circle cx="50" cy="50" r="41" fill="#000" stroke="#131313" stroke-width="11"></circle>
          <circle cx="52" cy="48" r="16" fill="url(#lens)"></circle>
          <circle cx="53" cy="45" r="2.400" fill="#7a5cff" opacity=".8"></circle>
          <circle cx="58" cy="50" r="4" fill="#50208a" opacity=".7"></circle>
        </svg>
      </div>
    </div>`;
  }
}
